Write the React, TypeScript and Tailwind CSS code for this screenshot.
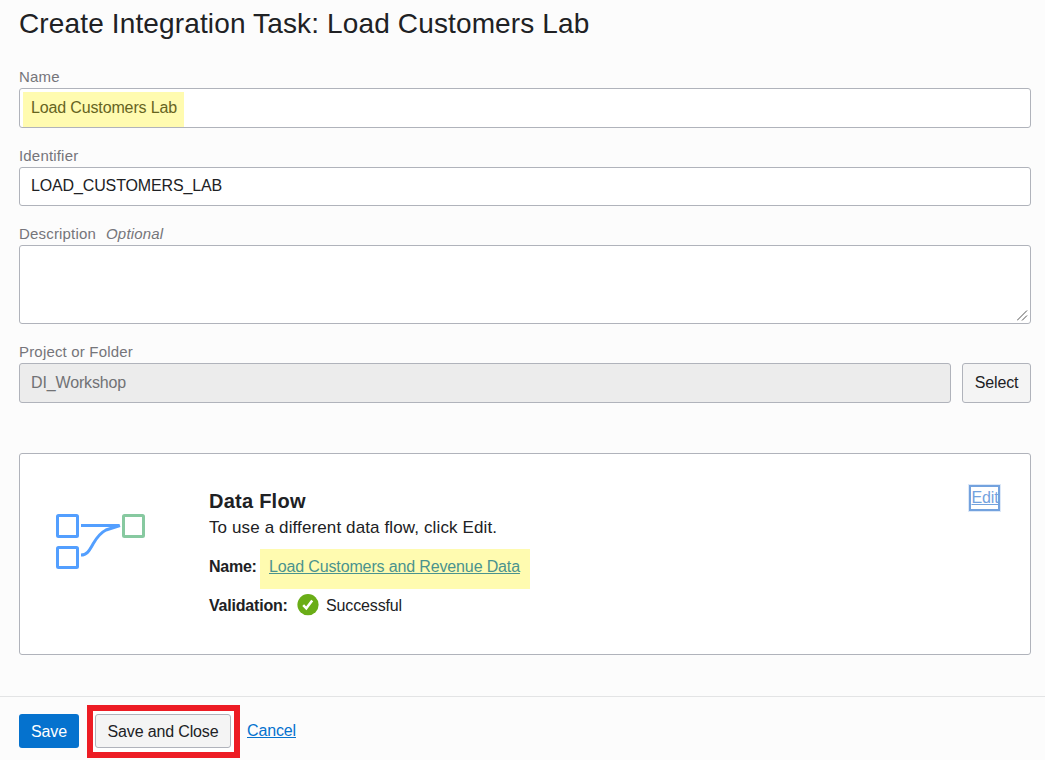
import type { ReactNode } from "react";

function Label({ children }: { children: ReactNode }) {
  return <div className="h-[20px] text-[15px] leading-[18px] tracking-[0.18px] whitespace-pre text-[#75757a]">{children}</div>;
}

function DataFlowIcon() {
  return (
    <svg width="92" height="60" viewBox="0 0 92 60" fill="none" strokeWidth="3" className="mt-[58px] ml-[35px] shrink-0">
      <rect x="2.5" y="3.5" width="20" height="21" rx="1" stroke="#539fff" />
      <rect x="2.5" y="35.5" width="20" height="20" rx="1" stroke="#539fff" />
      <rect x="68.5" y="3.5" width="20" height="21" rx="1" stroke="#87c9a0" />
      <path d="M26 13.500H64M26 43c6 0 8-4 12-11s7-11 13-14l14-4.500" stroke="#539fff" />
    </svg>
  );
}

export default function App() {
  return (
    <div className="flex h-[760px] w-[1045px] flex-col overflow-hidden bg-[#fcfcfc] font-['Liberation_Sans',Arial,sans-serif] text-base leading-5 tracking-[-0.14px] text-[#202124]">
      <main className="flex h-[696px] flex-col pr-[14px] pl-[19px]">
        <h1 className="h-[68px] pt-[8px] text-[28px] leading-8 tracking-[0.14px]">Create Integration Task: Load Customers Lab</h1>
        <Label>Name</Label>
        <div className="h-10 rounded-[3px] border border-[#b0b3bb] bg-white pl-[3px]">
          <div className="mt-[3px] h-[35px] w-[161px] bg-[#fffbb0] pt-[6px] pl-2 text-[#66641f]">Load Customers Lab</div>
        </div>
        <div className="mt-[19px]"><Label>Identifier</Label></div>
        <div className="h-[39px] rounded-[3px] border border-[#b0b3bb] bg-white pt-2 pl-[11px]">LOAD_CUSTOMERS_LAB</div>
        <div className="mt-[19px]"><Label>Description<i className="ml-[10px]">Optional</i></Label></div>
        <div className="flex h-[79px] items-end justify-end rounded-[3px] border border-[#b0b3bb] bg-white pr-[2px] pb-[2px]">
          <svg width="11" height="11" viewBox="0 0 11 11" stroke="#555" strokeWidth="1">
            <path d="M0 10.500l10-10M5 10.500l5-5" />
          </svg>
        </div>
        <div className="mt-[19px]"><Label>Project or Folder</Label></div>
        <div className="flex h-10 gap-[11px]">
          <div className="grow rounded-[3px] border border-[#b0b3bb] bg-[#ececec] pt-[9px] pl-[11px] text-[#717275]">DI_Workshop</div>
          <button className="w-[69px] rounded-[3px] border border-[#b0b3bb] bg-[#f4f4f4]">Select</button>
        </div>
        <section className="mt-[50px] flex h-[202px] rounded-[3px] border border-[#b0b3bb] bg-white">
          <DataFlowIcon />
          <div className="ml-[62px] grow pt-[35px]">
            <h2 className="text-xl leading-6 font-bold tracking-[0.25px]">Data Flow</h2>
            <p className="mt-[5px] text-[17px] tracking-[0.12px]">To use a different data flow, click Edit.</p>
            <div className="mt-[11px] flex h-10">
              <b className="w-[51px] pt-[8px] tracking-[-0.25px]">Name:</b>
              <div className="w-[270px] bg-[#fffbb0] pt-[8px] pl-[9px]">
                <a className="text-[#4b938e] underline decoration-1 underline-offset-1">Load Customers and Revenue Data</a>
              </div>
            </div>
            <div className="mt-[4px] flex h-[23px] items-center">
              <b className="w-[88px] pt-[2px] tracking-[-0.2px]">Validation:</b>
              <svg width="22" height="22" viewBox="0 0 22 22" className="mr-[7px]">
                <circle cx="11" cy="10.700" r="10.600" fill="#6aad17" />
                <path d="M6.200 11.200l3.100 3.100L15.200 6.500" fill="none" stroke="#fff" strokeWidth="2.500" />
              </svg>
              <span className="pt-[2px]">Successful</span>
            </div>
          </div>
          <a className="mt-[31px] mr-[30px] h-[26px] w-[31px] border-2 border-[#73a2de] pl-[0.5px] leading-[21px] text-[#73a2de] underline decoration-1 underline-offset-1 outline outline-[#dce8f8]">Edit</a>
        </section>
      </main>
      <footer className="flex h-16 border-t border-[#e3e4e5] pl-[19px]">
        <button className="mt-[17px] h-[34px] w-[60px] rounded-[3px] bg-[#0572ce] pt-px text-white">Save</button>
        <div className="mt-2 ml-2 flex h-[53px] w-[153px] border-6 border-[#ed1c24] bg-white p-[2px] pt-[3px]">
          <button className="h-[34px] w-[136px] rounded-[3px] border border-[#b0b3bb] bg-[#f4f4f4] pt-[2px]">Save and Close</button>
        </div>
        <a className="mt-[24px] ml-[7px] text-[#0572ce] underline decoration-1 underline-offset-1">Cancel</a>
      </footer>
    </div>
  );
}
